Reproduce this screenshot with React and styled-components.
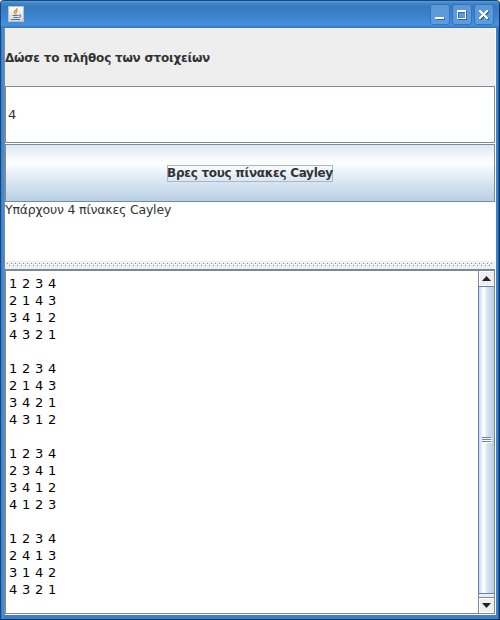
import React from 'react';
import styled, { createGlobalStyle } from 'styled-components';

const Global = createGlobalStyle`
  * { box-sizing: border-box; }
  body { margin: 0; background: #fff; }
`;

const Window = styled.main`
  width: 500px;
  height: 620px;
  display: flex;
  flex-direction: column;
  border: 1px solid #1c4673;
  border-right-color: #0f325c;
  border-bottom-color: #0f325c;
  border-radius: 4px 4px 0 0;
  background: linear-gradient(90deg, #2f78c4 0, #4a92df 2px, #3a80cc 3px, #3a80cc 495px, #4189d6 496px, #1d5796 498px);
  font-family: 'DejaVu Sans', sans-serif;
  font-size: 13px;
  color: #333;
  overflow: hidden;
`;

const TitleBar = styled.header`
  flex: 0 0 27px;
  display: flex;
  align-items: flex-start;
  justify-content: space-between;
  padding: 3px 5px 0 7px;
  background: linear-gradient(#5a9de0 0, #3f86d0 2px, #367abf 6px, #3c84d0 16px, #4590df 24px, #3274b8 27px);
  > svg { margin-top: 2px; }
`;

const Controls = styled.div`
  display: flex;
  gap: 2px;
`;

const Control = styled.button`
  width: 20px;
  height: 21px;
  padding: 0;
  border: 1px solid #3474b9;
  border-radius: 3px;
  background: linear-gradient(#5c97d8, #5c9ce2);
  svg { display: block; }
`;

const Content = styled.div`
  width: 492px;
  height: 587px;
  margin-left: 3px;
  display: flex;
  flex-direction: column;
  border-left: 1px solid #7a8a99;
  border-right: 1px solid #fff;
  background: #fff;
`;

const Prompt = styled.label`
  flex: 0 0 58px;
  display: flex;
  align-items: center;
  padding-top: 1px;
  background: #eee;
  font-weight: bold;
`;

const Fit = styled.span`
  display: block;
  white-space: pre;
  font-size: ${p => p.$size}px;
  letter-spacing: ${p => p.$spacing}px;
`;

const Field = styled.div`
  height: 57px;
  width: 490px;
  margin-bottom: 1px;
  display: flex;
  align-items: center;
  padding: 0 0 1px 2px;
  border: 1px solid #7a8a99;
`;

const Action = styled.button`
  flex: 0 0 58px;
  width: 490px;
  display: flex;
  align-items: center;
  justify-content: center;
  padding: 0;
  border: 1px solid #7a8a99;
  background: linear-gradient(#dde8f3 0, #fff 32%, #dde8f3 62%, #b8cfe5 100%);
  color: #333;
  font: bold 12px 'DejaVu Sans', sans-serif;
`;

const Focus = styled.span`
  width: 166px;
  height: 17px;
  display: flex;
  align-items: center;
  justify-content: center;
  border: 1px solid #a3b8cc;
`;

const Result = styled.div`
  flex: 0 0 59px;
  line-height: 15px;
`;

const Divider = styled.div`
  flex: 0 0 8px;
  padding: 2px 2px 0;
  background: #eee;
  svg { display: block; }
`;

const Output = styled.section`
  flex: 0 0 345px;
  width: 490px;
  display: flex;
  border: 1px solid #7a8a99;
  border-top-width: 2px;
`;

const Lines = styled.pre`
  flex: 1;
  margin: 0;
  padding: 4px 0 0 3px;
  color: #000;
  font: 13px/17px 'DejaVu Sans', sans-serif;
  word-spacing: 0.6px;
`;

const Scroll = styled.div`
  width: 16px;
  display: flex;
  flex-direction: column;
  border-left: 1px solid #7a8a99;
  background: #eee;
`;

const Arrow = styled.div`
  height: 15px;
  padding: 4px 0 0 2px;
  border: 1px solid #fff;
  border-right: 0;
  background: #eee;
  svg { display: block; }
`;

const Thumb = styled.div`
  height: 308px;
  margin-left: -1px;
  padding: 150px 0 0 3px;
  border: 1px solid #6382bf;
  border-right: 0;
  background: linear-gradient(90deg, #c4d6ed 0, #dde8f3 2px, #fff 4px, #f5f9fc 6px, #d5e3f0 8px, #b8cfe5 15px);
  svg { display: block; }
`;

const Gap = styled.div`
  flex: 1;
  border-bottom: 1px solid #7a8a99;
`;

const matrices = [
  ['1 2 3 4', '2 1 4 3', '3 4 1 2', '4 3 2 1'],
  ['1 2 3 4', '2 1 4 3', '3 4 2 1', '4 3 1 2'],
  ['1 2 3 4', '2 3 4 1', '3 4 1 2', '4 1 2 3'],
  ['1 2 3 4', '2 4 1 3', '3 1 4 2', '4 3 2 1'],
];

function JavaIcon() {
  return (
    <svg width="16" height="16" viewBox="0 0 16 16">
      <defs>
        <linearGradient id="tile" x2="0" y2="1">
          <stop stopColor="#fff" />
          <stop offset="1" stopColor="#d2d5d8" />
        </linearGradient>
      </defs>
      <rect x=".5" y=".5" width="15" height="15" fill="url(#tile)" stroke="#b7c0c9" />
      <path d="M8.8 2C10 4.2 5.8 4.5 6.2 6.2C6.4 7.2 7.2 7.4 7.6 8.4M9.8 4.6C7.6 5.2 8 6.4 8.6 7.4" fill="none" stroke="#f08a24" strokeWidth="1.3" />
      <path d="M4.5 9.5H10.5M5.5 11.5H10M3 13.5H12" fill="none" stroke="#4e789f" strokeWidth="1.1" />
      <path d="M10.8 9H12.5V10.8L10.6 11.8" fill="none" stroke="#4e789f" />
    </svg>
  );
}

const shapes = {
  minimize: 'M4 11h9v2H4z',
  maximize: 'M4 4h9v9H4zM5 6v6h7V6z',
  close: 'M4 4h2v1h1v1h1v1h1v-1h1v-1h1v-1h2v2h-1v1h-1v1h-1v1h1v1h1v1h1v2h-2v-1h-1v-1h-1v-1h-1v1h-1v1h-1v1h-2v-2h1v-1h1v-1h1v-1h-1v-1h-1v-1h-1z',
};

function ControlIcon({ kind }) {
  return (
    <svg width="18" height="19" viewBox="0 0 18 19" fillRule="evenodd" shapeRendering="crispEdges">
      <path d={shapes[kind]} transform="translate(1 2)" fill="#356598" />
      <path d={shapes[kind]} transform="translate(0 1)" fill="#fff" />
    </svg>
  );
}

export default function App() {
  return (
    <>
      <Global />
      <Window>
        <TitleBar>
          <JavaIcon />
          <Controls>
            {['minimize', 'maximize', 'close'].map(kind => (
              <Control key={kind} aria-label={kind}><ControlIcon kind={kind} /></Control>
            ))}
          </Controls>
        </TitleBar>
        <Content>
          <Prompt><Fit $size={12} $spacing={-0.23}>Δώσε το πλήθος των στοιχείων</Fit></Prompt>
          <Field>4</Field>
          <Action><Focus><Fit $size={12} $spacing={-0.28}>Βρες τους πίνακες Cayley</Fit></Focus></Action>
          <Result><Fit $size={12.5} $spacing={-0.2}>Υπάρχουν 4 πίνακες Cayley</Fit></Result>
          <Divider>
            <svg width="486" height="5" shapeRendering="crispEdges">
              <defs>
                <pattern id="grip" width="4" height="4" patternUnits="userSpaceOnUse">
                  <path d="M1 1h1v1h-1zM3 3h1v1h-1z" fill="#fff" />
                  <path d="M0 0h1v1h-1zM2 2h1v1h-1z" fill="#7a8a99" />
                </pattern>
              </defs>
              <rect width="486" height="4" fill="url(#grip)" />
            </svg>
          </Divider>
          <Output>
            <Lines>{matrices.map(rows => rows.join('\n')).join('\n\n')}</Lines>
            <Scroll>
              <Arrow><svg width="9" height="5"><path d="M4.5 0L9 5H0Z" fill="#222" /></svg></Arrow>
              <Thumb>
                <svg width="10" height="6" shapeRendering="crispEdges">
                  <path d="M1 1h9v1H1zM1 3h9v1H1zM1 5h9v1H1z" fill="#fff" />
                  <path d="M0 0h9v1H0zM0 2h9v1H0zM0 4h9v1H0z" fill="#6382bf" />
                </svg>
              </Thumb>
              <Gap />
              <Arrow><svg width="9" height="5"><path d="M4.5 5L9 0H0Z" fill="#222" /></svg></Arrow>
            </Scroll>
          </Output>
        </Content>
      </Window>
    </>
  );
}
